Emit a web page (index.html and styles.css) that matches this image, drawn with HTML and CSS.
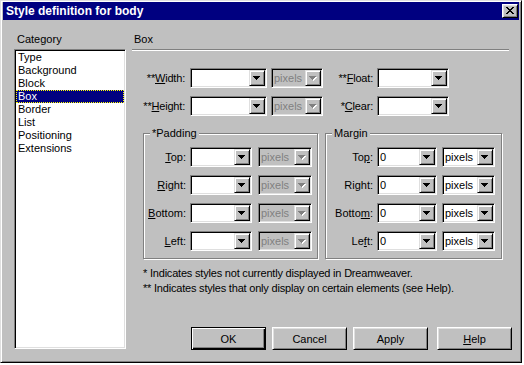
FILE: index.html
```html
<!DOCTYPE html>
<html lang="en">
<head>
<meta charset="UTF-8">
<title>Style definition for body</title>
<link rel="stylesheet" href="styles.css">
</head>
<body>

<div class="window">
    <div class="titlebar">
        <span>Style definition for body</span>
        <button class="close" title="Close">
            <svg width="8" height="7" viewBox="0 0 8 7" shape-rendering="crispEdges">
                <path d="M0 0h2v1h-2zM6 0h2v1h-2zM1 1h2v1h-2zM5 1h2v1h-2zM2 2h4v1h-4zM3 3h2v1h-2zM2 4h4v1h-4zM1 5h2v1h-2zM5 5h2v1h-2zM0 6h2v1h-2zM6 6h2v1h-2z" fill="#000"/>
            </svg>
        </button>
    </div>

    <div class="dialog">
        <div class="category">
            <div class="caption">Category</div>
            <ul class="list">
                <li>Type</li>
                <li>Background</li>
                <li>Block</li>
                <li class="selected">Box</li>
                <li>Border</li>
                <li>List</li>
                <li>Positioning</li>
                <li>Extensions</li>
            </ul>
        </div>

        <div class="panel">
            <div class="caption">Box</div>
            <div class="rule"></div>

            <div class="box-rows">
                <div class="row">
                    <label class="lbl-a">**<u>W</u>idth:</label>
                    <div class="combo c-size"><span class="val"></span><span class="drop"></span></div>
                    <div class="combo c-unit disabled"><span class="val">pixels</span><span class="drop"></span></div>
                    <label class="lbl-b">**<u>F</u>loat:</label>
                    <div class="combo c-float"><span class="val"></span><span class="drop"></span></div>
                </div>
                <div class="row">
                    <label class="lbl-a">**<u>H</u>eight:</label>
                    <div class="combo c-size"><span class="val"></span><span class="drop"></span></div>
                    <div class="combo c-unit disabled"><span class="val">pixels</span><span class="drop"></span></div>
                    <label class="lbl-b">*<u>C</u>lear:</label>
                    <div class="combo c-float"><span class="val"></span><span class="drop"></span></div>
                </div>
            </div>

            <div class="groups">
                <div class="group g-pad">
                    <div class="legend">*Padding</div>
                    <div class="grow">
                        <label><u>T</u>op:</label>
                        <div class="combo c-num"><span class="val"></span><span class="drop"></span></div>
                        <div class="combo c-px disabled"><span class="val">pixels</span><span class="drop"></span></div>
                    </div>
                    <div class="grow">
                        <label><u>R</u>ight:</label>
                        <div class="combo c-num"><span class="val"></span><span class="drop"></span></div>
                        <div class="combo c-px disabled"><span class="val">pixels</span><span class="drop"></span></div>
                    </div>
                    <div class="grow">
                        <label><u>B</u>ottom:</label>
                        <div class="combo c-num"><span class="val"></span><span class="drop"></span></div>
                        <div class="combo c-px disabled"><span class="val">pixels</span><span class="drop"></span></div>
                    </div>
                    <div class="grow">
                        <label><u>L</u>eft:</label>
                        <div class="combo c-num"><span class="val"></span><span class="drop"></span></div>
                        <div class="combo c-px disabled"><span class="val">pixels</span><span class="drop"></span></div>
                    </div>
                </div>

                <div class="group g-mar">
                    <div class="legend">Margin</div>
                    <div class="grow">
                        <label>To<u>p</u>:</label>
                        <div class="combo c-num"><span class="val">0</span><span class="drop"></span></div>
                        <div class="combo c-px"><span class="val">pixels</span><span class="drop"></span></div>
                    </div>
                    <div class="grow">
                        <label>Ri<u>g</u>ht:</label>
                        <div class="combo c-num"><span class="val">0</span><span class="drop"></span></div>
                        <div class="combo c-px"><span class="val">pixels</span><span class="drop"></span></div>
                    </div>
                    <div class="grow">
                        <label>Botto<u>m</u>:</label>
                        <div class="combo c-num"><span class="val">0</span><span class="drop"></span></div>
                        <div class="combo c-px"><span class="val">pixels</span><span class="drop"></span></div>
                    </div>
                    <div class="grow">
                        <label>Le<u>f</u>t:</label>
                        <div class="combo c-num"><span class="val">0</span><span class="drop"></span></div>
                        <div class="combo c-px"><span class="val">pixels</span><span class="drop"></span></div>
                    </div>
                </div>
            </div>

            <p class="note first">* Indicates styles not currently displayed in Dreamweaver.</p>
            <p class="note">** Indicates styles that only display on certain elements (see Help).</p>

            <div class="buttons">
                <button class="btn default">OK</button>
                <button class="btn">Cancel</button>
                <button class="btn">Apply</button>
                <button class="btn help"><u>H</u>elp</button>
            </div>
        </div>
    </div>
</div>

</body>
</html>
```

FILE: styles.css
```css
body { margin: 0; background: #fff; font-family: "Liberation Sans", Arial, sans-serif; font-size: 11px; color: #000; }

/* window frame */
.window { width: 522px; height: 363px; box-sizing: border-box; background: #c0c0c0; border: 1px solid; border-color: #dfdfdf #000 #000 #dfdfdf; box-shadow: inset 1px 1px #fff, inset -1px -1px #808080; padding: 1px 2px 2px 2px; display: flex; flex-direction: column; }
.titlebar { height: 18px; flex: none; background: #000080; color: #fff; font-weight: bold; font-size: 12px; display: flex; align-items: center; justify-content: space-between; padding: 0 1px 0 3px; }
.close { width: 16px; height: 14px; box-sizing: border-box; padding: 0; background: #c0c0c0; border: 1px solid; border-color: #fff #000 #000 #fff; box-shadow: inset 1px 1px #dfdfdf, inset -1px -1px #808080; display: flex; align-items: center; justify-content: center; }
.close svg { display: block; margin: 0 1px 1px 0; }

.dialog { flex: 1; display: flex; padding: 13px 7px 10px 11px; }
.caption { line-height: 13px; margin-bottom: 3px; }

/* category list */
.category { width: 112px; display: flex; flex-direction: column; }
.category .caption { padding-left: 3px; }
.list { margin: 0; padding: 1px; list-style: none; height: 300px; box-sizing: border-box; background: #fff; border: 1px solid; border-color: #808080 #fff #fff #808080; box-shadow: inset 1px 1px #000, inset -1px -1px #dfdfdf; }
.list li { height: 13px; line-height: 13px; padding-left: 2px; }
.list li.selected { background: #000080; color: #fff; outline: 1px dotted #ffff00; outline-offset: -1px; }

/* right panel */
.panel { width: 380px; margin-left: 6px; display: flex; flex-direction: column; }
.panel .caption { padding-left: 2px; }
.rule { width: 377px; border-top: 1px solid #808080; border-bottom: 1px solid #fff; }

.box-rows { margin-top: 17px; display: flex; flex-direction: column; gap: 8px; }
.row { display: flex; align-items: center; height: 20px; }
.lbl-a { width: 53px; margin-right: 5px; text-align: right; letter-spacing: -0.2px; }
.lbl-b { width: 50px; margin-right: 4px; text-align: right; letter-spacing: -0.2px; }
.c-size { width: 77px; }
.c-unit { width: 52px; margin-left: 4px; }
.c-float { width: 72px; }

/* combo boxes */
.combo { box-sizing: border-box; height: 20px; display: flex; background: #fff; border: 1px solid; border-color: #808080 #fff #fff #808080; box-shadow: inset 1px 1px #000, inset -1px -1px #dfdfdf; padding: 1px; }
.combo .val { flex: 1; line-height: 16px; padding-left: 1px; overflow: hidden; white-space: nowrap; }
.combo .drop { width: 16px; height: 16px; box-sizing: border-box; flex: none; background: #c0c0c0; border: 1px solid; border-color: #dfdfdf #000 #000 #dfdfdf; box-shadow: inset 1px 1px #fff, inset -1px -1px #808080; display: flex; align-items: center; justify-content: center; }
.combo .drop::after { content: ""; width: 7px; height: 4px; margin: 0 1px 1px 0;
    background:
        linear-gradient(#000, #000) 0 0 / 7px 1px no-repeat,
        linear-gradient(#000, #000) 1px 1px / 5px 1px no-repeat,
        linear-gradient(#000, #000) 2px 2px / 3px 1px no-repeat,
        linear-gradient(#000, #000) 3px 3px / 1px 1px no-repeat; }
.combo.disabled { background: #c0c0c0; color: #808080; }
.combo.disabled .drop::after { filter: drop-shadow(1px 1px 0 #fff);
    background:
        linear-gradient(#808080, #808080) 0 0 / 7px 1px no-repeat,
        linear-gradient(#808080, #808080) 1px 1px / 5px 1px no-repeat,
        linear-gradient(#808080, #808080) 2px 2px / 3px 1px no-repeat,
        linear-gradient(#808080, #808080) 3px 3px / 1px 1px no-repeat; }

/* padding / margin groups */
.groups { display: flex; gap: 7px; margin: 17px 0 0 11px; }
.group { box-sizing: border-box; border: 1px solid #808080; box-shadow: inset 1px 1px #fff, 1px 1px #fff; padding-bottom: 7px; display: flex; flex-direction: column; gap: 8px; }
.legend { width: fit-content; line-height: 13px; margin: -7px 0 -1px 6px; padding: 0 2px; background: #c0c0c0; }
.grow { display: flex; align-items: center; height: 20px; }
.grow label { margin-right: 4px; text-align: right; }
.g-pad { width: 175px; }
.g-pad label { width: 42px; }
.g-pad .c-num { width: 62px; }
.g-pad .c-px { width: 54px; margin-left: 6px; }
.g-mar { width: 177px; }
.g-mar label { width: 47px; }
.g-mar .c-num { width: 60px; }
.g-mar .c-px { width: 53px; margin-left: 5px; }

.note { margin: 0 0 0 11px; line-height: 15px; letter-spacing: -0.2px; }
.note.first { margin-top: 7px; }

/* buttons */
.buttons { margin-top: auto; display: flex; justify-content: flex-end; gap: 6px; }
.btn { width: 75px; height: 23px; box-sizing: border-box; padding: 0; font: inherit; color: #000; background: #c0c0c0; border: 1px solid; border-color: #fff #000 #000 #fff; box-shadow: inset 1px 1px #dfdfdf, inset -1px -1px #808080; }
.btn.default { border-color: #000; box-shadow: inset 1px 1px #fff, inset -1px -1px #000, inset -2px -2px #808080; }
.btn.help { margin-left: 3px; }
```
